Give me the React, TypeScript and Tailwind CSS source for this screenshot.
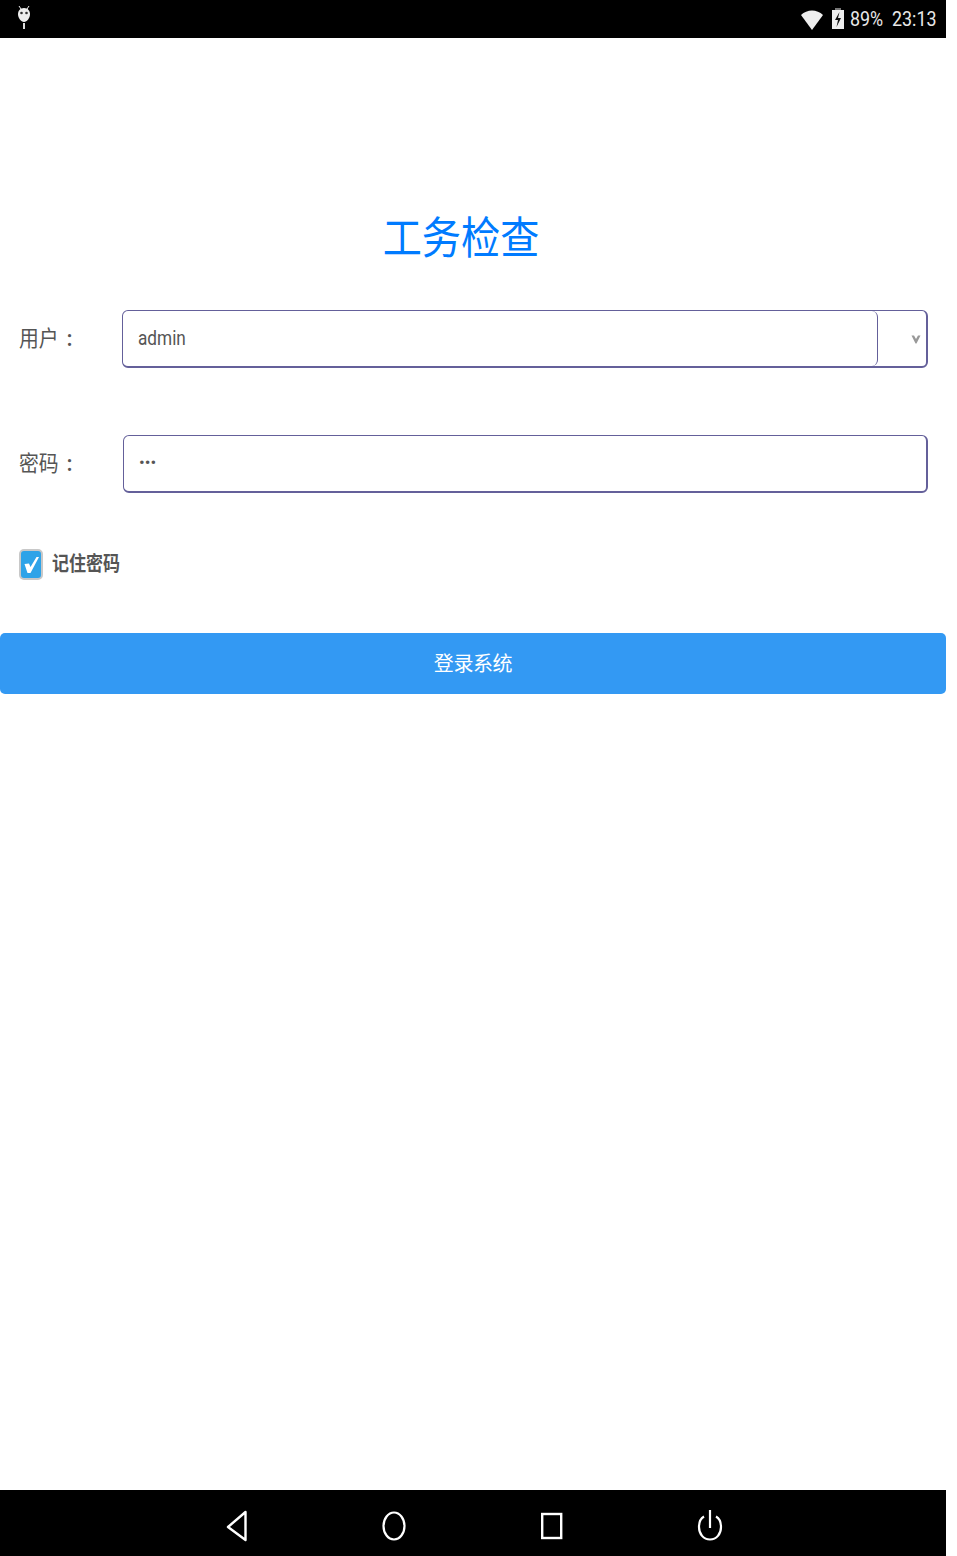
import type { ReactNode } from 'react';

const cjk = 'font-["Roboto","Noto_Sans_CJK_SC",sans-serif]';

// the capture is squeezed horizontally, so text gets narrowed to match
function Narrow({ children, className = '' }: { children: ReactNode; className?: string }) {
  return <span className={`inline-block origin-left whitespace-nowrap ${className}`}>{children}</span>;
}

function StatusBar() {
  return (
    <div className="flex h-[38px] items-center justify-between bg-black pl-[16px] pr-[10px] text-[#e8e8e8]">
      <svg width="16" height="26" viewBox="0 0 16 26" className="mt-[-6px]">
        <path d="M3 3 L5 6 M13 3 L11 6" stroke="#eee" strokeWidth="1" />
        <path d="M8 5 C12 5 14 8 14 11 C14 15 11 19 8 19 C5 19 2 15 2 11 C2 8 4 5 8 5 Z" fill="#eee" />
        <circle cx="5.5" cy="10" r="1.3" fill="#333" />
        <circle cx="10.5" cy="10" r="1.3" fill="#333" />
        <rect x="7" y="20" width="2" height="6" fill="#ddd" />
      </svg>
      <div className="flex items-center">
        <svg width="22" height="21" viewBox="0 0 22 21">
          <path d="M0 6 C6 0 16 0 22 6 L11 21 Z" fill="#eee" />
        </svg>
        <svg width="14" height="22" viewBox="0 0 14 22" className="ml-[8px]">
          <rect x="4" y="0" width="6" height="3" fill="#777" />
          <rect x="1" y="2" width="12" height="19" fill="#eee" />
          <path d="M8.5 4 L4 12 H7 L5.5 19 L10 10 H7 Z" fill="#111" />
        </svg>
        <span className="ml-[5px] w-[33px] text-[21px] leading-none">
          <Narrow className="scale-x-[0.85]">89%</Narrow>
        </span>
        <span className="ml-[9px] w-[44px] text-[21px] leading-none">
          <Narrow className="scale-x-[0.85]">23:13</Narrow>
        </span>
      </div>
    </div>
  );
}

function NavBar() {
  return (
    <div className="flex h-[66px] items-center bg-black pl-[225px] pt-[6px]">
      <svg width="24" height="32" viewBox="0 0 24 32" fill="none" stroke="#fff" strokeWidth="2.4">
        <path d="M20.5 3 L3 18 L20.5 31 Z" strokeLinejoin="round" transform="translate(0 -1)" />
      </svg>
      <svg width="26" height="32" viewBox="0 0 26 32" fill="none" stroke="#fff" strokeWidth="2.2" className="ml-[132px]">
        <ellipse cx="13" cy="16" rx="10.5" ry="13.5" />
      </svg>
      <svg width="24" height="28" viewBox="0 0 24 28" fill="none" stroke="#fff" strokeWidth="2.4" className="ml-[133px]">
        <rect x="2.2" y="2" width="19" height="24" />
      </svg>
      <svg width="28" height="34" viewBox="0 0 28 34" fill="none" stroke="#fff" strokeWidth="2.2" className="ml-[132px]">
        <path d="M8 7.5 C4.5 9.5 3 13 3 18 C3 25 7.5 30.5 14 30.5 C20.5 30.5 25 25 25 18 C25 13 23.5 9.5 20 7.5" />
        <path d="M14 1 V19" />
      </svg>
    </div>
  );
}

export default function App() {
  return (
    <div className={`flex h-[1556px] w-[946px] flex-col bg-white ${cjk}`}>
      <StatusBar />
      <main className="flex-1">
        <h1 className="ml-[-24px] mt-[171px] h-[60px] scale-x-[0.89] text-center text-[44px] font-normal leading-[60px] text-[#007bff]">
          工务检查
        </h1>

        <div className="mt-[41px] flex items-center pl-[19px] pr-[18px]">
          <label className="w-[103px] pb-[2px] text-[22px] text-[#555]">
            <Narrow className="scale-x-[0.9]">
              用户<span className="ml-[9px] font-bold">:</span>
            </Narrow>
          </label>
          <div className="flex h-[58px] flex-1 rounded-[6px] border border-b-2 border-r-2 border-[#64609a]">
            <div className="flex flex-1 items-center rounded-[6px] border-r border-[#64609a] pb-[2px] pl-[15px] text-[20px] text-[#555]">
              <Narrow className="scale-x-[0.86]">admin</Narrow>
            </div>
            <div className="flex w-[48px] items-center justify-end pr-[5px]">
              <svg width="10" height="10" viewBox="0 0 10 10">
                <path d="M0.5 1.5 L3 1.5 L5 5 L7 1.5 L9.5 1.5 L5.5 9.5 L4.5 9.5 Z" fill="#999" />
              </svg>
            </div>
          </div>
        </div>

        <div className="mt-[67px] flex items-center pl-[19px] pr-[18px]">
          <label className="w-[104px] pb-[2px] text-[22px] text-[#555]">
            <Narrow className="scale-x-[0.9]">
              密码<span className="ml-[9px] font-bold">:</span>
            </Narrow>
          </label>
          <div className="flex h-[58px] flex-1 items-center rounded-[6px] border border-b-2 border-r-2 border-[#64609a] pb-[1px] pl-[15px] text-[17px] text-[#555]">
            •••
          </div>
        </div>

        <div className="mt-[56px] flex items-center pl-[19px]">
          <span className="flex h-[31px] w-[24px] items-center justify-center rounded-[5px] border-2 border-[#c8c8c8] bg-[#2ea3e8]">
            <svg width="17" height="19" viewBox="0 0 17 19">
              <path d="M1.5 9 L6 8.5 L7.5 12 L13.5 2 L16 2 L7.5 18 L4.5 18 Z" fill="#fff" />
            </svg>
          </span>
          <span className="ml-[9px] pb-[2px] text-[20px] font-bold leading-none text-[#555]">
            <Narrow className="scale-x-[0.85]">记住密码</Narrow>
          </span>
        </div>

        <button className="mt-[53px] flex h-[61px] w-full items-center justify-center rounded-[5px] bg-[#3399f3] text-[20px] tracking-[-0.4px] text-white">
          登录系统
        </button>
      </main>
      <NavBar />
    </div>
  );
}
